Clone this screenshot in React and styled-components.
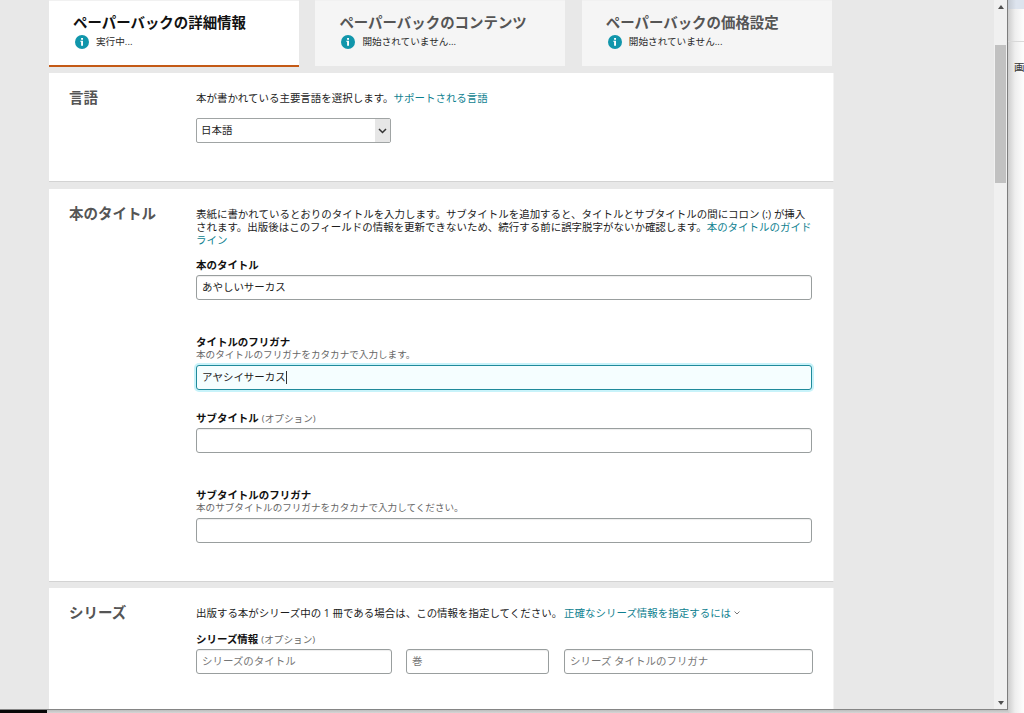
import styled, { createGlobalStyle } from "styled-components";

const GlobalStyle = createGlobalStyle`
    * {
        box-sizing: border-box;
    }
    body {
        margin: 0;
        overflow: hidden;
        font-family: "Open Sans", "Noto Sans CJK JP", sans-serif;
        font-size: 10.47px;
        line-height: 13px;
        color: #1c1c1c;
    }
`;

const Screen = styled.div`
    height: 713px;
    width: 1024px;
    display: grid;
    grid-template-columns: 1008px 16px;
    grid-template-rows: 710px 3px;
    overflow: hidden;
`;

const Browser = styled.div`
    display: flex;
    background-color: #e8e8e8;
    border-right: 1px solid #7d7d7d;
    border-bottom: 1px solid #858585;
    overflow: hidden;
`;

const Page = styled.div`
    width: 994px;
    flex: none;
    padding-left: 49px;
    overflow: hidden;
`;

const Scrollbar = styled.div`
    width: 13px;
    display: flex;
    flex-direction: column;
    align-items: center;
    background-color: #f0f0f0;
    padding: 5px 0 4px;
`;

const Thumb = styled.div`
    width: 11px;
    height: 138px;
    margin-top: 36px;
    margin-bottom: auto;
    background-color: #c1c1c1;
`;

const Behind = styled.div`
    height: 713px;
    grid-row: 1 / 3;
    grid-column: 2;
    background: linear-gradient(to right, #cdcdcd, #eee 7px, #fcfcfc 15px);
    overflow: hidden;
`;

const BehindTop = styled.div`
    height: 9px;
    background: linear-gradient(to right, #c3c9d1, #dde4ee 8px);
`;

const BehindBar = styled.div`
    height: 33px;
    border-bottom: 1px solid #d9d9d9;
`;

const BehindText = styled.div`
    margin: 19px 0 0 6px;
    width: 20px;
    font-size: 10.5px;
    color: #333;
`;

const Shadow = styled.div`
    display: flex;
    background: linear-gradient(#bdbdbd, #d6d6d6);
`;

const Desktop = styled.div`
    width: 47px;
    background-color: #080808;
`;

const Tabs = styled.div`
    display: flex;
    gap: 16.4px;
    height: 67px;
`;

const Tab = styled.div`
    width: 250px;
    height: ${(p) => (p.$active ? 67 : 66)}px;
    padding: 14px 0 0 24px;
    background-color: ${(p) => (p.$active ? "#fff" : "#f5f5f5")};
    color: ${(p) => (p.$active ? "#111" : "#555")};
    border-top: 1px solid #f1f1f1;
    border-bottom: ${(p) => (p.$active ? "2px solid #c45a16" : "none")};
`;

const TabTitle = styled.div`
    font-size: 14.45px;
    font-weight: 700;
    line-height: 16px;
    white-space: nowrap;
`;

const TabStatus = styled.div`
    display: flex;
    align-items: center;
    gap: 7px;
    height: 14px;
    margin: 4px 0 0 2px;
    font-size: 9.65px;
    color: #2a2a2a;
`;

const StatusText = styled.span`
    margin-bottom: 1px;
`;

const Panel = styled.div`
    display: flex;
    width: 785px;
    height: ${(p) => p.$height}px;
    margin-top: ${(p) => p.$gap}px;
    padding: 18px 0 0 20px;
    background-color: #fff;
    border-bottom: 1px solid #d3d3d3;
    border-right: 1px solid #f3f3f3;
`;

const Heading = styled.div`
    width: 127px;
    flex: none;
    font-size: 14.5px;
    font-weight: 700;
    line-height: 13px;
    color: #555;
`;

const Body = styled.div`
    width: 617px;
`;

const Line = styled.div`
    height: 13px;
    line-height: 15px;
    white-space: nowrap;
`;

const Link = styled.span`
    color: #0f7f90;
    margin-left: ${(p) => p.$space || 0}px;
`;

const Label = styled.div`
    height: 13px;
    line-height: 15px;
    margin-top: ${(p) => p.$gap}px;
    font-weight: 700;
    color: #111;
    white-space: nowrap;
`;

const Optional = styled.span`
    font-size: 9.65px;
    font-weight: 400;
    color: #666;
    margin-left: 3px;
`;

const Hint = styled.div`
    height: 13px;
    font-size: 9.58px;
    color: #666;
    white-space: nowrap;
`;

const Field = styled.div`
    display: flex;
    align-items: center;
    width: ${(p) => p.$width || 616}px;
    height: 25px;
    margin-top: 4px;
    padding-left: 5px;
    border: 1px solid ${(p) => (p.$focus ? "#208a9b" : "#999e9e")};
    border-radius: 3px;
    background-color: ${(p) => (p.$focus ? "#f5feff" : "#fff")};
    box-shadow: ${(p) => (p.$focus ? "0 0 0 2px #c8f3fa" : "inset 0 1px 1px #eee")};
    color: ${(p) => (p.$placeholder ? "#767676" : "#1c1c1c")};
    white-space: nowrap;
`;

const Caret = styled.span`
    width: 1px;
    height: 13px;
    background-color: #333;
`;

const Fields = styled.div`
    display: flex;
`;

const FieldGap = styled.div`
    width: ${(p) => p.$width}px;
`;

const Select = styled.div`
    display: flex;
    align-items: center;
    width: 195px;
    height: 25px;
    margin-top: 14px;
    padding-left: 4px;
    border: 1px solid #a0a4a4;
    border-radius: 2px;
    background-color: #fff;
`;

const SelectArrow = styled.div`
    display: flex;
    align-items: center;
    justify-content: center;
    width: 15px;
    height: 23px;
    margin-left: auto;
    background-color: #e6e6e6;
`;

const Svg = styled.svg`
    display: block;
    flex: none;
`;

const InlineSvg = styled.svg`
    margin: 0 0 2px 3px;
`;

function InfoIcon() {
    return (
        <Svg width="14" height="14" viewBox="0 0 14 14">
            <circle cx="7" cy="7" r="7" fill="#1196ab" />
            <rect x="6.1" y="3" width="1.9" height="1.8" fill="#fff" />
            <path d="M5.3 5.8H8v4.9H6.1V6.7h-.8z" fill="#fff" />
        </Svg>
    );
}

const tabs = [
    { title: "ペーパーバックの詳細情報", status: "実行中...", active: true },
    { title: "ペーパーバックのコンテンツ", status: "開始されていません..." },
    { title: "ペーパーバックの価格設定", status: "開始されていません..." },
];

export default function App() {
    return (
        <Screen>
            <GlobalStyle />
            <Browser>
                <Page>
                    <Tabs>
                        {tabs.map((t) => (
                            <Tab key={t.title} $active={t.active}>
                                <TabTitle>{t.title}</TabTitle>
                                <TabStatus>
                                    <InfoIcon />
                                    <StatusText>{t.status}</StatusText>
                                </TabStatus>
                            </Tab>
                        ))}
                    </Tabs>

                    <Panel $gap={6} $height={109}>
                        <Heading>言語</Heading>
                        <Body>
                            <Line>
                                本が書かれている主要言語を選択します。<Link>サポートされる言語</Link>
                            </Line>
                            <Select>
                                日本語
                                <SelectArrow>
                                    <Svg width="9" height="6" viewBox="0 0 9 6">
                                        <path d="M1 1l3.5 3.5L8 1" fill="none" stroke="#333" strokeWidth="1.5" />
                                    </Svg>
                                </SelectArrow>
                            </Select>
                        </Body>
                    </Panel>

                    <Panel $gap={7} $height={393}>
                        <Heading>本のタイトル</Heading>
                        <Body>
                            <Line>表紙に書かれているとおりのタイトルを入力します。サブタイトルを追加すると、タイトルとサブタイトルの間にコロン (:) が挿入</Line>
                            <Line>
                                されます。出版後はこのフィールドの情報を更新できないため、続行する前に誤字脱字がないか確認します。<Link>本のタイトルのガイド</Link>
                            </Line>
                            <Line>
                                <Link>ライン</Link>
                            </Line>
                            <Label $gap={12}>本のタイトル</Label>
                            <Field>あやしいサーカス</Field>
                            <Label $gap={35}>タイトルのフリガナ</Label>
                            <Hint>本のタイトルのフリガナをカタカナで入力します。</Hint>
                            <Field $focus>
                                アヤシイサーカス
                                <Caret />
                            </Field>
                            <Label $gap={21}>
                                サブタイトル<Optional>(オプション)</Optional>
                            </Label>
                            <Field />
                            <Label $gap={35}>サブタイトルのフリガナ</Label>
                            <Hint>本のサブタイトルのフリガナをカタカナで入力してください。</Hint>
                            <Field />
                        </Body>
                    </Panel>

                    <Panel $gap={6} $height={140}>
                        <Heading>シリーズ</Heading>
                        <Body>
                            <Line>
                                出版する本がシリーズ中の 1 冊である場合は、この情報を指定してください。
                                <Link $space={2}>正確なシリーズ情報を指定するには</Link>
                                <InlineSvg width="6" height="4" viewBox="0 0 6 4">
                                    <path d="M.5.5L3 3 5.5.5" fill="none" stroke="#777" />
                                </InlineSvg>
                            </Line>
                            <Label $gap={13}>
                                シリーズ情報<Optional>(オプション)</Optional>
                            </Label>
                            <Fields>
                                <Field $width={196} $placeholder>シリーズのタイトル</Field>
                                <FieldGap $width={14} />
                                <Field $width={143} $placeholder>巻</Field>
                                <FieldGap $width={15} />
                                <Field $width={249} $placeholder>シリーズ タイトルのフリガナ</Field>
                            </Fields>
                        </Body>
                    </Panel>
                </Page>
                <Scrollbar>
                    <Svg width="6" height="4" viewBox="0 0 6 4">
                        <path d="M0 4l3-4 3 4z" fill="#505050" />
                    </Svg>
                    <Thumb />
                    <Svg width="6" height="4" viewBox="0 0 6 4">
                        <path d="M0 0l3 4 3-4z" fill="#505050" />
                    </Svg>
                </Scrollbar>
            </Browser>
            <Behind>
                <BehindTop />
                <BehindBar />
                <BehindText>画</BehindText>
            </Behind>
            <Shadow>
                <Desktop />
            </Shadow>
        </Screen>
    );
}
